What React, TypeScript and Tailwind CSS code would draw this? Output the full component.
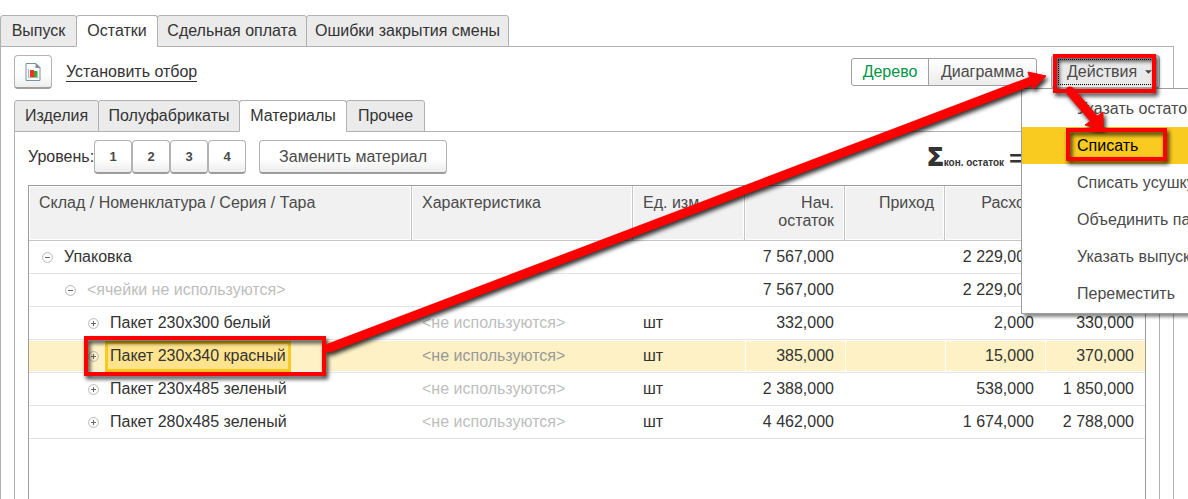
import type { ReactNode } from "react";

type Row = {
  level: number;
  open: boolean;
  name: string;
  muted?: boolean;
  selected?: boolean;
  feature: string;
  unit: string;
  start: string;
  income: string;
  expense: string;
  end: string;
};

type Tab = { title: string; width: string };

const unused = "<не используются>";

const rows: Row[] = [
  { level: 0, open: true, name: "Упаковка", feature: "", unit: "", start: "7 567,000", income: "", expense: "2 229,000", end: "" },
  { level: 1, open: true, name: "<ячейки не используются>", muted: true, feature: "", unit: "", start: "7 567,000", income: "", expense: "2 229,000", end: "" },
  { level: 2, open: false, name: "Пакет 230х300 белый", feature: unused, unit: "шт", start: "332,000", income: "", expense: "2,000", end: "330,000" },
  { level: 2, open: false, name: "Пакет 230х340 красный", selected: true, feature: unused, unit: "шт", start: "385,000", income: "", expense: "15,000", end: "370,000" },
  { level: 2, open: false, name: "Пакет 230х485 зеленый", feature: unused, unit: "шт", start: "2 388,000", income: "", expense: "538,000", end: "1 850,000" },
  { level: 2, open: false, name: "Пакет 280х485 зеленый", feature: unused, unit: "шт", start: "4 462,000", income: "", expense: "1 674,000", end: "2 788,000" },
];

const pageTabs: Tab[] = [
  { title: "Выпуск", width: "w-[77px]" },
  { title: "Остатки", width: "w-[82px]" },
  { title: "Сдельная оплата", width: "w-[150px]" },
  { title: "Ошибки закрытия смены", width: "w-[203px]" },
];

const stockTabs: Tab[] = [
  { title: "Изделия", width: "w-[85px]" },
  { title: "Полуфабрикаты", width: "w-[142px]" },
  { title: "Материалы", width: "w-[108px]" },
  { title: "Прочее", width: "w-[79px]" },
];

const indents = ["pl-[13px]", "pl-[36px]", "pl-[59px]"];

const menuItems = ["Указать остаток", "Списать", "Списать усушку", "Объединить партии", "Указать выпуск", "Переместить"];

function Tabs({ items, active }: { items: Tab[]; active: string }) {
  return (
    <div role="tablist" className="relative z-10 -mb-px flex">
      {items.map(({ title, width }) => (
        <button
          key={title}
          role="tab"
          aria-selected={title === active}
          className={
            "-mr-px flex h-8 items-center justify-center rounded-t-[3px] border border-[#b0b0b0] whitespace-nowrap " +
            width +
            (title === active ? " border-b-white bg-white" : " bg-[#ebebeb]")
          }
        >
          {title}
        </button>
      ))}
    </div>
  );
}

function PushButton({ children, className, label }: { children: ReactNode; className: string; label?: string }) {
  return (
    <button
      aria-label={label}
      className={`flex h-[34px] items-center justify-center rounded-[4px] border border-b-2 border-[#b3b3b3] border-b-[#9c9c9c] bg-linear-to-b from-white from-60% to-[#ececec] text-[#4a4a4a] ${className}`}
    >
      {children}
    </button>
  );
}

function Toggle({ open }: { open: boolean }) {
  return (
    <button aria-label={open ? "Свернуть" : "Развернуть"} className="shrink-0">
      <svg width="11" height="11" viewBox="0 0 11 11" fill="none" className="block">
        <circle cx="5.5" cy="5.5" r="4.9" stroke="#b5b5b5" />
        <path d={open ? "M3 5.5h5" : "M3 5.5h5M5.5 3v5"} stroke="#666" />
      </svg>
    </button>
  );
}

function ReportIcon() {
  return (
    <svg width="16" height="18" viewBox="0 0 16 18" fill="none">
      <path d="M1 .5h10l4 4v13H1z" fill="#fff" stroke="#7d8f9b" />
      <path d="M10.500 0l5 5h-5z" fill="#7d8f9b" />
      <path d="M3.500 6v8.500h10" stroke="#a9b4bb" />
      <path d="M5 7h4v7H5z" fill="#ee3524" />
      <path d="M9 8h3.500v6H9z" fill="#3fa535" />
    </svg>
  );
}

function HeadCell({ children, right }: { children?: ReactNode; right?: boolean }) {
  return (
    <th
      className={`h-[55px] border-r border-b border-[#c4c4c4] bg-[#f1f1f1] px-[10px] pt-2 align-top leading-[18px] font-normal shadow-[inset_0_0_0_1px_#fff] last:border-r-0 ${right ? "text-right" : "text-left whitespace-nowrap"}`}
    >
      {children}
    </th>
  );
}

function StockRow({ row }: { row: Row }) {
  const cell = row.selected
    ? "border-b border-[#e3e3e3] bg-[#fdf1c5] shadow-[inset_0_1px_0_#fff,inset_0_-1px_0_#fff,inset_1px_0_0_#fff] px-[11px] "
    : "border-b border-[#e3e3e3] px-[11px] ";
  const flat = row.selected
    ? "border-b border-[#e3e3e3] bg-[#fdf1c5] shadow-[inset_0_1px_0_#fff,inset_0_-1px_0_#fff] "
    : "border-b border-[#e3e3e3] ";
  return (
    <tr className="h-[33px]">
      <td className={flat + indents[row.level]}>
        <div className="flex items-center gap-[6px]">
          <Toggle open={row.open} />
          <span
            className={
              row.selected
                ? "-my-px flex h-[31px] items-center border-[3px] border-[#f9c91f] bg-[#ffe48d] px-[2px] whitespace-nowrap"
                : row.muted
                  ? "px-[5px] whitespace-nowrap text-[#bdbdbd]"
                  : "px-[5px] whitespace-nowrap"
            }
          >
            {row.name}
          </span>
        </div>
      </td>
      <td className={flat + "px-[10px] whitespace-nowrap " + (row.selected ? "text-[#999]" : "text-[#bdbdbd]")}>{row.feature}</td>
      <td className={flat + "px-[10px]"}>{row.unit}</td>
      <td className={cell + "text-right"}>{row.start}</td>
      <td className={cell + "text-right"}>{row.income}</td>
      <td className={cell + "text-right"}>{row.expense}</td>
      <td className={cell + "text-right"}>{row.end}</td>
    </tr>
  );
}

function ActionsMenu() {
  return (
    <div className="relative">
      <button className="flex h-[34px] w-[109px] items-center rounded-[4px] border border-b-2 border-[#a8a8a8] bg-[#e9e9e9] px-[6px] text-[#4a4a4a]">
        <span className="flex h-[26px] w-full items-center border border-dotted border-black pl-2">
          Действия
          <svg width="8" height="4" viewBox="0 0 8 4" className="ml-2">
            <path d="M0 0h8L4 4z" fill="#444" />
          </svg>
        </span>
      </button>
      <ul role="menu" className="absolute top-[33px] -left-[30px] z-20 w-[220px] border border-[#9e9e9e] bg-white py-px text-[#4a4a4a] shadow-[3px_3px_3px_rgba(0,0,0,0.45)]">
        {menuItems.map((item) => (
          <li key={item} role="none">
            <button
              role="menuitem"
              className={
                item === "Списать"
                  ? "h-[37px] w-full bg-[#f9ca20] pl-[55px] text-left whitespace-nowrap text-black"
                  : "h-[37px] w-full pl-[55px] text-left whitespace-nowrap"
              }
            >
              {item}
            </button>
          </li>
        ))}
      </ul>
    </div>
  );
}

function Annotations() {
  return (
    <svg
      aria-hidden="true"
      width="1188"
      height="400"
      viewBox="0 0 1188 400"
      fill="none"
      className="pointer-events-none absolute top-0 left-0 z-30 drop-shadow-[2px_3px_2px_rgba(0,0,0,0.8)]"
    >
      <g stroke="#f00" strokeWidth="4">
        <path d="M86 338h238v36H86z" />
        <path d="M1055 56h99v35h-99z" />
        <path d="M1068 130h97v29h-97z" />
      </g>
      <path d="M329 348L1034 80" stroke="#f00" strokeWidth="9" strokeLinecap="round" />
      <path d="M1028 72L1046 76L1033 89z" fill="#f00" stroke="#f00" strokeLinejoin="round" />
      <path d="M1070 91L1095 120" stroke="#f00" strokeWidth="9" strokeLinecap="round" />
      <path d="M1103 112L1103 130L1085 125z" fill="#f00" stroke="#f00" strokeLinejoin="round" />
    </svg>
  );
}

export default function App() {
  return (
    <main className="relative flex h-screen flex-col overflow-hidden bg-white pt-[15px] pr-[14px] font-['Liberation_Sans',Arial,sans-serif] text-base leading-5 text-[#333]">
      <Tabs items={pageTabs} active="Остатки" />
      <section className="flex flex-1 flex-col border border-b-0 border-[#b0b0b0] px-[13px] pt-2">
        <div className="flex items-center">
          <PushButton label="Отчет" className="w-[38px]">
            <ReportIcon />
          </PushButton>
          <a href="#filter" className="ml-[14px] border-b border-[#333] leading-[18px]">
            Установить отбор
          </a>
          <div className="mr-[14px] ml-auto flex h-7 text-[#4a4a4a]">
            <button className="w-[78px] rounded-l-[3px] border border-[#a0a0a0] bg-white text-[#009646]">Дерево</button>
            <button className="-ml-px w-[109px] rounded-r-[3px] border border-[#a0a0a0] bg-linear-to-b from-white to-[#ececec]">Диаграмма</button>
          </div>
          <ActionsMenu />
        </div>
        <div className="mt-[11px] flex flex-1 flex-col">
          <Tabs items={stockTabs} active="Материалы" />
          <section className="flex flex-1 flex-col border border-b-0 border-[#b0b0b0] px-[13px] pt-2">
            <div className="flex items-center">
              <span>Уровень:</span>
              {["1", "2", "3", "4"].map((n) => (
                <PushButton key={n} className="w-[38px] text-[13px] font-bold">
                  {n}
                </PushButton>
              ))}
              <PushButton className="ml-[13px] w-[188px]">Заменить материал</PushButton>
              <div className="mr-[124px] ml-auto flex items-baseline font-bold">
                <span className="font-['Open_Sans',sans-serif] text-[27px] leading-7 font-extrabold">Σ</span>
                <span className="text-[10px]">кон. остаток</span>
                <span className="ml-[5px] text-[22px] leading-7">=</span>
              </div>
            </div>
            <div className="mt-[11px] flex-1 border border-b-0 border-[#9c9c9c]">
              <table className="w-full table-fixed border-separate border-spacing-0">
                <colgroup>
                  <col />
                  <col className="w-[221px]" />
                  <col className="w-[112px]" />
                  <col className="w-[100px]" />
                  <col className="w-[100px]" />
                  <col className="w-[100px]" />
                  <col className="w-[100px]" />
                </colgroup>
                <thead className="text-[#4a4a4a]">
                  <tr>
                    <HeadCell>Склад / Номенклатура / Серия / Тара</HeadCell>
                    <HeadCell>Характеристика</HeadCell>
                    <HeadCell>Ед. изм.</HeadCell>
                    <HeadCell right>Нач. остаток</HeadCell>
                    <HeadCell right>Приход</HeadCell>
                    <HeadCell right>Расход</HeadCell>
                    <HeadCell right />
                  </tr>
                </thead>
                <tbody>
                  {rows.map((row) => (
                    <StockRow key={row.name} row={row} />
                  ))}
                </tbody>
              </table>
            </div>
          </section>
        </div>
      </section>
      <Annotations />
    </main>
  );
}
